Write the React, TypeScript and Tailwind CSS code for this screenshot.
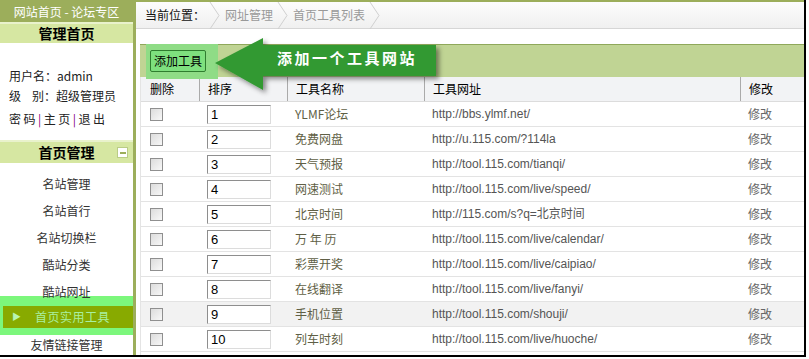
const TOOLS = [
  { n: 1, name: "YLMF论坛", url: "http://bbs.ylmf.net/" },
  { n: 2, name: "免费网盘", url: "http://u.115.com/?114la" },
  { n: 3, name: "天气预报", url: "http://tool.115.com/tianqi/" },
  { n: 4, name: "网速测试", url: "http://tool.115.com/live/speed/" },
  { n: 5, name: "北京时间", url: "http://115.com/s?q=北京时间" },
  { n: 6, name: "万 年 历", url: "http://tool.115.com/live/calendar/" },
  { n: 7, name: "彩票开奖", url: "http://tool.115.com/live/caipiao/" },
  { n: 8, name: "在线翻译", url: "http://tool.115.com/live/fanyi/" },
  { n: 9, name: "手机位置", url: "http://tool.115.com/shouji/" },
  { n: 10, name: "列车时刻", url: "http://tool.115.com/live/huoche/" },
];

const MENU = ["名站管理", "名站首行", "名站切换栏", "酷站分类", "酷站网址"];

function Chevron() {
  return (
    <svg width="12" height="27" viewBox="0 0 12 27" className="mx-1 shrink-0">
      <path d="M1 0 L10 13.5 L1 27" fill="none" stroke="#d0d0d0" strokeWidth="1" />
    </svg>
  );
}

function Checkbox() {
  return <span className="block w-[13px] h-[13px] border border-[#8f8f8f] bg-gradient-to-br from-[#dcdcdc] to-[#f8f8f8]" />;
}

export default function App() {
  return (
    <div className="w-[809px] h-[359px] bg-white overflow-hidden" style={{ fontFamily: '"Noto Sans CJK SC", "Liberation Sans", sans-serif' }}>
      <div className="relative w-[806px] h-[357px] border-r-2 border-b-2 border-black overflow-hidden flex flex-col">
        <div className="h-[2px] bg-[#9cae5b] shrink-0" />
        <div className="flex flex-1 min-h-0">
          {/* Sidebar */}
          <aside className="w-[136px] shrink-0 border-r-[3px] border-[#9cae5b] flex flex-col">
            <div className="h-[28px] bg-[#9cae5b] text-white text-[12px] flex items-center justify-center">网站首页 - 论坛专区</div>
            <div className="h-[3px] bg-[#e9f2cc]" />
            <div className="h-[19px] bg-[#d6e7a2] text-[14px] font-bold text-black flex items-center justify-center">管理首页</div>
            <div className="pl-[9px] pt-[23px] text-[12px] text-[#222] leading-[20px]">
              <div>用户名：admin</div>
              <div>级<span className="inline-block w-[11px]" />别：超级管理员</div>
              <div className="mt-[3px] tracking-[2.5px]">
                密码<span className="text-[#800080]">|</span>主页<span className="text-[#800080]">|</span>退出
              </div>
            </div>
            <div className="mt-[11px] h-[3px] bg-[#e9f2cc]" />
            <div className="h-[21px] bg-[#d6e7a2] relative flex items-center justify-center text-[14px] font-bold text-black">
              首页管理
              <span className="absolute right-[5px] top-[5px] w-[11px] h-[11px] bg-white border border-[#b9cc86] flex items-center justify-center">
                <span className="w-[6px] h-[2px] bg-[#9cae5b]" />
              </span>
            </div>
            <div className="pt-[7px] text-[12px] text-[#333]">
              {MENU.map((m) => (
                <div key={m} className="h-[27px] flex items-center justify-center">{m}</div>
              ))}
              <div className="h-[39px] -mt-[9px] bg-[#7cf77c] pt-[10px]">
                <div className="ml-[3px] w-[130px] h-[22px] bg-[#88aa00] flex items-center text-[#a8f0a0] text-[12px]">
                  <span className="ml-[9px] text-[9px] text-[#b8f5b0]">▶</span>
                  <span className="ml-[14px] tracking-[0.5px]">首页实用工具</span>
                </div>
              </div>
              <div className="h-[20px] flex items-center justify-center">友情链接管理</div>
            </div>
          </aside>

          {/* Main */}
          <main className="flex-1 min-w-0 flex flex-col">
            <div className="h-[27px] bg-gradient-to-b from-[#fdfdfd] to-[#f0f0f0] border-b border-[#d6d6d6] flex items-center text-[12px] pl-[9px]">
              <span className="text-[#111]">当前位置：</span>
              <Chevron />
              <span className="text-[#999]">网址管理</span>
              <Chevron />
              <span className="text-[#999]">首页工具列表</span>
              <Chevron />
            </div>
            <div className="h-[15px] shrink-0" />
            <div className="ml-[4px] flex-1 flex flex-col">
              <div className="h-[33px] bg-[#c0d494] border-t border-[#8fa85a] flex items-center pl-[6px]">
                <div className="relative bg-[#8fdc86] w-[72px] h-[35px] -my-[2px] flex items-center pl-[4px]">
                  <button className="h-[22px] px-[3px] bg-[#7ee07e] border border-[#2f7d2f] rounded-[2px] text-[12px] text-black leading-none">添加工具</button>
                </div>
              </div>
              <div className="border-l border-[#e4e4e4] flex-1">
                <div className="h-[25px] bg-[#f2f3f5] border-b border-[#dcdcdc] flex items-center text-[12px] text-black">
                  <div className="w-[58px] pl-[9px]">删除</div>
                  <div className="w-[88px] h-full border-l border-[#aaaaaa] pl-[8px] flex items-center">排序</div>
                  <div className="w-[137px] h-full border-l border-[#aaaaaa] pl-[8px] flex items-center">工具名称</div>
                  <div className="w-[316px] h-full border-l border-[#aaaaaa] pl-[8px] flex items-center">工具网址</div>
                  <div className="flex-1 h-full border-l border-[#aaaaaa] pl-[8px] flex items-center">修改</div>
                </div>
                {TOOLS.map((t) => (
                  <div key={t.n} className={`h-[25px] border-b border-[#e3e3e3] flex items-center text-[12px] ${t.n === 9 ? "bg-[#f2f2f2]" : ""}`}>
                    <div className="w-[58px] pl-[9px]"><Checkbox /></div>
                    <div className="w-[88px] pl-[8px]">
                      <div className="w-[64px] h-[19px] bg-white border border-t-[#8e8e8e] border-l-[#8e8e8e] border-r-[#dcdcdc] border-b-[#dcdcdc] text-[13px] text-black leading-[17px] pl-[3px]" style={{ fontFamily: '"Liberation Sans", sans-serif' }}>{t.n}</div>
                    </div>
                    <div className="w-[137px] pl-[8px] text-[#5f5f45]">{t.name}</div>
                    <div className="w-[316px] pl-[8px] text-[#555]" style={{ fontFamily: '"Liberation Sans", "Noto Sans CJK SC", sans-serif' }}>{t.url}</div>
                    <div className="flex-1 pl-[8px] text-[#666]">修改</div>
                  </div>
                ))}
              </div>
            </div>
          </main>
        </div>

        {/* Annotation arrow */}
        <svg className="absolute left-[210px] top-[33px] pointer-events-none" width="240" height="72" viewBox="0 0 240 72">
          <defs>
            <filter id="sh" x="-10%" y="-20%" width="130%" height="150%">
              <feDropShadow dx="3" dy="3" stdDeviation="2.5" floodColor="#000" floodOpacity="0.45" />
            </filter>
          </defs>
          <polygon points="5,30 53,5 53,12 226,12 226,43 53,43 53,57" fill="#339933" filter="url(#sh)" />
        </svg>
        <div className="absolute left-[277px] top-[48px] text-white font-bold text-[15px] tracking-[2.5px] leading-[20px] pointer-events-none">添加一个工具网站</div>
      </div>
    </div>
  );
}
